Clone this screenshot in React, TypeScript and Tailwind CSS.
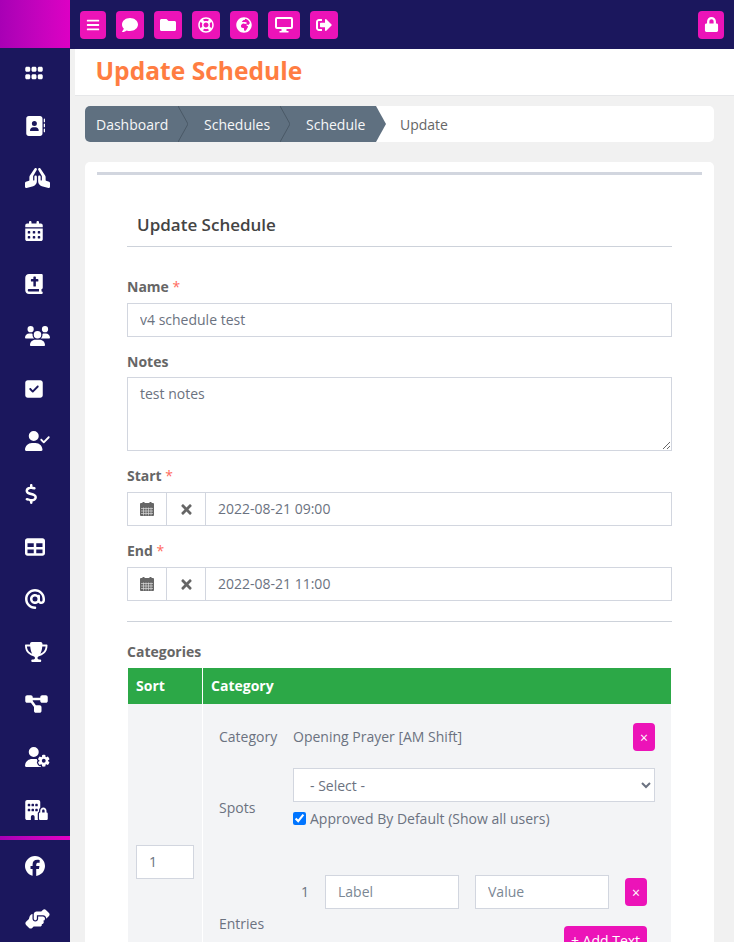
import React from "react";
import { FaBars, FaComment, FaFolder, FaRegLifeRing, FaGlobeAfrica, FaSignOutAlt, FaLock, FaTimes } from "react-icons/fa";
import {
  FaGrip, FaAddressBook, FaHandsPraying, FaCalendarDays, FaBookBible, FaUsers, FaSquareCheck,
  FaUserCheck, FaDollarSign, FaTable, FaAt, FaTrophy, FaDiagramProject, FaUserGear, FaBuildingLock,
  FaFacebook, FaHandshakeAngle,
} from "react-icons/fa6";

const side = [
  <FaGrip className="w-[18px] h-[20px]" />,
  <FaAddressBook className="w-[20px] h-[20px]" />,
  <FaHandsPraying className="w-[25px] h-[20px]" />,
  <FaCalendarDays className="w-[18px] h-[20px]" />,
  <FaBookBible className="w-[18px] h-[20px]" />,
  <FaUsers className="w-[25px] h-[20px]" />,
  <FaSquareCheck className="w-[18px] h-[20px]" />,
  <FaUserCheck className="w-[25px] h-[20px]" />,
  <FaDollarSign className="w-[12.5px] h-[20px]" />,
  <FaTable className="w-[20px] h-[20px]" />,
  <FaAt className="w-[20px] h-[20px]" />,
  <FaTrophy className="w-[22.5px] h-[20px]" />,
  <FaDiagramProject className="w-[23px] h-[20px]" />,
  <FaUserGear className="w-[25px] h-[20px]" />,
  <FaBuildingLock className="w-[23px] h-[20px]" />,
];

const Monitor = () => (
  <svg viewBox="0 0 18 16" className="w-[18px] h-[16px]" fill="white">
    <rect x="1" y="1" width="16" height="10" rx="1" fill="none" stroke="white" strokeWidth="2" />
    <rect x="6.5" y="12" width="5" height="2" />
    <rect x="4.5" y="14" width="9" height="1.5" />
  </svg>
);

const Cal = () => (
  <svg viewBox="0 0 14 14" className="w-[14px] h-[14px]">
    <rect x="2.5" y="0" width="2" height="2" fill="#666666" />
    <rect x="9.5" y="0" width="2" height="2" fill="#666666" />
    <rect x="0" y="1" width="14" height="13" rx="1" fill="#666666" />
    <path d="M1 6.5H13M1 9H13M1 11.5H13M3.5 5.5V13.5M6 5.5V13.5M8.5 5.5V13.5M11 5.5V13.5" stroke="white" strokeWidth="0.7" opacity="0.75" />
  </svg>
);

const top: [React.ReactNode, string][] = [
  [<FaBars className="w-[14px] h-[14px]" />, "w-[26px]"],
  [<FaComment className="w-[16px] h-[16px]" />, "w-[28px]"],
  [<FaFolder className="w-[16px] h-[16px]" />, "w-[28px]"],
  [<FaRegLifeRing className="w-[16px] h-[16px]" />, "w-[28px]"],
  [<FaGlobeAfrica className="w-[16px] h-[16px]" />, "w-[28px]"],
  [<Monitor />, "w-[32px]"],
  [<FaSignOutAlt className="w-[16px] h-[16px]" />, "w-[28px]"],
];

function Crumb({ label, cls, last }: { label: string; cls: string; last?: boolean }) {
  return (
    <div className={`relative flex items-center h-full bg-[#5f7080] text-[#f6f7f8] ${cls}`}>
      {label}
      <svg viewBox="0 0 10 36" className="absolute z-10 left-full top-0 w-[10px] h-[36px]">
        {last ? (
          <polygon points="0,0 10,18 0,36" fill="#5f7080" />
        ) : (
          <polyline points="0,0 10,18 0,36" fill="none" stroke="#4a5966" strokeWidth="1" />
        )}
      </svg>
    </div>
  );
}

const inputCls =
  "block w-full h-[34px] bg-white border border-[#d2d6df] px-[12px] pb-[2px] text-[14px] text-[#6b7280] placeholder:text-[#7b8794] outline-none";
const labelCls = "block h-[20px] leading-[20px] text-[14px] font-bold text-[#666666]";
const Req = () => <span className="font-normal text-[#ff6b5e]"> *</span>;

function DateGroup({ value }: { value: string }) {
  return (
    <div className="flex h-[34px] border border-[#d2d6df] bg-white text-[14px] text-[#6b7280]">
      <div className="flex items-center justify-center w-[39px] border-r border-[#d2d6df]">
        <Cal />
      </div>
      <div className="flex items-center justify-center w-[39px] border-r border-[#d2d6df] text-[#666666]">
        <FaTimes className="w-[15px] h-[15px]" />
      </div>
      <div className="flex items-center pl-[12px] pb-[2px]">{value}</div>
    </div>
  );
}

const XBtn = () => (
  <button className="flex items-center justify-center w-[22px] h-[28px] rounded-[4px] bg-[#ec13b8] text-white text-[14px]">
    ×
  </button>
);

export default function App() {
  return (
    <div className="flex h-screen overflow-hidden bg-[#f1f1f1] font-['Open_Sans',sans-serif]">
      <aside className="w-[70px] shrink-0 bg-[#1b175d] text-white">
        <div className="h-[48px] bg-gradient-to-r from-[#a800b5] to-[#dd00c4]" />
        <div className="-mt-px">
          {side.map((ic, i) => (
            <div key={i} className="flex items-center h-[52.6px] pl-[25px]">{ic}</div>
          ))}
        </div>
        <div className="h-[4px] bg-gradient-to-r from-[#a800b5] to-[#e400c4]" />
        <div className="flex items-center h-[52.6px] pl-[25px]"><FaFacebook className="w-[20px] h-[20px]" /></div>
        <div className="flex items-center h-[52.6px] pl-[25px]"><FaHandshakeAngle className="w-[25px] h-[20px]" /></div>
      </aside>

      <div className="flex-1 min-w-0">
        <header className="flex items-center justify-between h-[49px] bg-[#1b175d] pl-[10px] pr-[10px] text-white">
          <div className="flex gap-[10px]">
            {top.map(([ic, w], i) => (
              <button key={i} className={`flex items-center justify-center h-[28px] rounded-[4px] bg-[#ec13b8] ${w}`}>{ic}</button>
            ))}
          </div>
          <button className="flex items-center justify-center w-[26px] h-[28px] rounded-[4px] bg-[#ec13b8]">
            <FaLock className="w-[15px] h-[15px]" />
          </button>
        </header>

        <div className="ml-[5px] h-[47px] bg-white border-b border-[#e6e7e9] pl-[20.5px] flex items-center">
          <h1 className="text-[24.6px] font-bold text-[#ff7d42] leading-none -mt-[1px]">Update Schedule</h1>
        </div>

        <nav className="flex items-center h-[36px] ml-[15px] mr-[20px] mt-[10px] rounded-[5px] overflow-hidden bg-white text-[14px]">
          <Crumb label="Dashboard" cls="w-[93px] pl-[11px]" />
          <Crumb label="Schedules" cls="w-[102px] pl-[26px]" />
          <Crumb label="Schedule" cls="w-[96px] pl-[26px]" last />
          <span className="pl-[24px] text-[#666666]">Update</span>
        </nav>

        <main className="ml-[15px] mr-[20px] mt-[20px] rounded-t-[5px] bg-white pt-[10px] px-[12px]">
          <div className="h-[3px] bg-[#d2d6df]" />
          <div className="px-[30px]">
            <h2 className="h-[72px] border-b border-[#cdd2da] pl-[10px] pt-[37px] text-[17px] leading-[26px] font-semibold text-[#444444]">
              Update Schedule
            </h2>

            <label className={`${labelCls} mt-[30px] mb-[6px]`}>Name<Req /></label>
            <input className={inputCls} defaultValue="v4 schedule test" />

            <label className={`${labelCls} mt-[15px] mb-[5px]`}>Notes</label>
            <textarea className={`${inputCls} !h-[74px] pt-[5px]`} defaultValue="test notes" />

            <label className={`${labelCls} mt-[15px] mb-[6px]`}>Start<Req /></label>
            <DateGroup value="2022-08-21 09:00" />

            <label className={`${labelCls} mt-[15px] mb-[6px]`}>End<Req /></label>
            <DateGroup value="2022-08-21 11:00" />

            <hr className="mt-[20px] border-0 border-t border-[#cdd2da]" />

            <label className={`${labelCls} mt-[20px] mb-[6px]`}>Categories</label>

            <div className="mx-px text-[14px]">
              <div className="flex h-[36px] bg-[#2ca847] text-white font-bold items-center">
                <div className="w-[75px] h-full flex items-center pl-[8px] pb-[2px] border-r border-white">Sort</div>
                <div className="pl-[8px] pb-[2px]">Category</div>
              </div>
              <div className="flex h-[316px] bg-[#f3f4f6] text-[#6b7280]">
                <div className="w-[75px] flex items-center pl-[8px] border-r border-white">
                  <input className={`${inputCls} !w-[58px]`} defaultValue="1" />
                </div>
                <div className="flex-1 pl-[16px] pr-[16px] pt-[19px]">
                  <div className="flex items-center h-[28px]">
                    <div className="w-[74px] pb-[2px]">Category</div>
                    <div className="flex-1 pb-[2px]">Opening Prayer [AM Shift]</div>
                    <XBtn />
                  </div>
                  <div className="flex items-center h-[80px] mt-[17px]">
                    <div className="w-[74px] pb-[2px]">Spots</div>
                    <div className="flex-1 h-full">
                      <select className="block w-full h-[34px] bg-white border border-[#d2d6df] pl-[12px] text-[14px] text-[#6b7280]">
                        <option>- Select -</option>
                      </select>
                      <label className="flex items-center h-[20px] mt-[6px]">
                        <input type="checkbox" defaultChecked className="w-[13px] h-[13px] mr-[4px]" />
                        Approved By Default (Show all users)
                      </label>
                    </div>
                  </div>
                  <div className="flex items-center h-[98px] mt-[27px]">
                    <div className="w-[74px] pb-[2px]">Entries</div>
                    <div className="flex-1 h-full pl-[8px] pr-[8px]">
                      <div className="flex items-center gap-[16px]">
                        <span className="w-[8px] pb-[2px]">1</span>
                        <input className={`${inputCls} !w-[134px]`} placeholder="Label" />
                        <input className={`${inputCls} !w-[134px]`} placeholder="Value" />
                        <XBtn />
                      </div>
                      <div className="flex justify-end mt-[17px]">
                        <button className="h-[28px] w-[83px] rounded-[4px] bg-[#ec13b8] text-white text-[14px]">+ Add Text</button>
                      </div>
                    </div>
                  </div>
                </div>
              </div>
            </div>
          </div>
        </main>
      </div>
    </div>
  );
}
